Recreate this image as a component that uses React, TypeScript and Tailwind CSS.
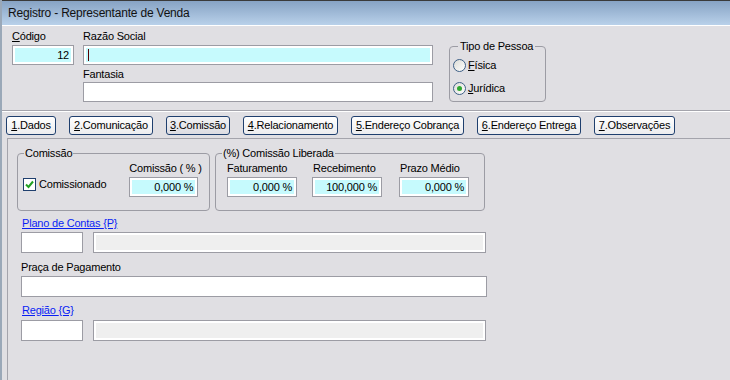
import React from 'react'

function Box({ w, h, fill, children }: { w: string; h: string; fill: string; children?: React.ReactNode }) {
  return (
    <div className={`${w} ${h} border border-[#9c9ca4] bg-white p-[2px]`}>
      <div className={`h-full w-full ${fill} flex items-center justify-end pr-[2px] leading-none whitespace-nowrap`}>{children}</div>
    </div>
  )
}

function Radio({ checked }: { checked?: boolean }) {
  return (
    <span className="w-[13px] h-[13px] rounded-full border border-[#3d5f86] bg-gradient-to-br from-[#dcdcd6] to-white flex items-center justify-center">
      {checked && <span className="w-[5px] h-[5px] rounded-full bg-[#2fa82f]" />}
    </span>
  )
}

function Tab({ w, n, label, active }: { w: string; n: string; label: string; active?: boolean }) {
  return (
    <div
      className={`${w} h-[19px] rounded-[3px] border border-[#1f3f6e] flex items-center justify-center leading-none whitespace-nowrap ${
        active ? 'bg-gradient-to-b from-[#f2f2f4] to-[#dcdce2]' : 'bg-gradient-to-b from-white to-[#ececee]'
      }`}
    >
      <span>
        <u>{n}</u>.{label}
      </span>
    </div>
  )
}

export default function App() {
  return (
    <div className="w-[730px] h-[380px] overflow-hidden bg-[#e0dfe3] border-l-2 border-[#9aa8b8] font-['Liberation_Sans',Arial,sans-serif] text-[11px] tracking-[-0.2px] text-black whitespace-nowrap flex flex-col">
      {/* title bar */}
      <div className="h-[26px] border-t border-[#3a3a3a] border-b border-b-white bg-gradient-to-b from-[#87a3c4] to-[#b9d1ea] flex items-center pl-[6px] text-[12px] text-[#111]">
        Registro - Representante de Venda
      </div>

      {/* header */}
      <div className="h-[84px] flex pl-[10px] pt-[3px]">
        <div className="w-[62px]">
          <div className="h-[14px] leading-[14px]">
            <u>C</u>ódigo
          </div>
          <div className="mt-[2px]">
            <Box w="w-[62px]" h="h-[20px]" fill="bg-[#c6fafd]">
              12
            </Box>
          </div>
        </div>

        <div className="ml-[9px] w-[350px]">
          <div className="h-[14px] leading-[14px]">Razão Social</div>
          <div className="mt-[2px] h-[20px] border border-[#9c9ca4] bg-white p-[2px]">
            <div className="h-full bg-[#c6fafd] flex items-center pl-[2px]">
              <span className="w-[1px] h-[12px] bg-[#5a0000]" />
            </div>
          </div>
          <div className="mt-[2px] h-[14px] leading-[14px]">Fantasia</div>
          <div className="mt-[1px] h-[20px] border border-[#9c9ca4] bg-white" />
        </div>

        <fieldset className="ml-[16px] mt-[11px] w-[97px] h-[62px] border border-[#9c9ca4] rounded-[4px]">
          <legend className="ml-[8px] px-[2px] leading-[12px]">Tipo de Pessoa</legend>
          <div className="flex flex-col pl-[3px] pt-[6px] gap-[9px]">
            <div className="flex items-center gap-[2px] h-[14px]">
              <Radio />
              <span>
                <u>F</u>ísica
              </span>
            </div>
            <div className="flex items-center gap-[2px] h-[14px]">
              <Radio checked />
              <span>
                <u>J</u>urídica
              </span>
            </div>
          </div>
        </fieldset>
      </div>

      {/* separator */}
      <div className="h-[2px] border-t border-[#a4a4ac] border-b border-b-white" />

      {/* tabs */}
      <div className="flex gap-[13px] pl-[4px] mt-[4px]">
        <Tab w="w-[50px]" n="1" label="Dados" />
        <Tab w="w-[84px]" n="2" label="Comunicação" />
        <Tab w="w-[64px]" n="3" label="Comissão" active />
        <Tab w="w-[95px]" n="4" label="Relacionamento" />
        <Tab w="w-[113px]" n="5" label="Endereço Cobrança" />
        <Tab w="w-[104px]" n="6" label="Endereço Entrega" />
        <Tab w="w-[81px]" n="7" label="Observações" />
      </div>

      {/* panel */}
      <div className="flex-1 ml-[5px] mt-[3px] border-t border-l border-[#a4a4ac] pl-[9px] pt-[8px]">
        <div className="flex">
          <fieldset className="w-[193px] h-[64px] border border-[#9c9ca4] rounded-[4px]">
            <legend className="ml-[6px] px-[1px] leading-[12px]">Comissão</legend>
            <div className="flex">
              <div className="flex items-center gap-[3px] ml-[5px] mt-[18px] h-[14px]">
                <span className="w-[13px] h-[13px] border border-[#1f3f6e] bg-white flex items-center justify-center">
                  <svg width="9" height="9" viewBox="0 0 9 9">
                    <path d="M1 4.5 L3.5 7 L8 1.5" fill="none" stroke="#22a022" strokeWidth="2" />
                  </svg>
                </span>
                <span>Comissionado</span>
              </div>
              <div className="ml-[23px] mt-[2px]">
                <div className="h-[14px] leading-[14px]">Comissão ( % )</div>
                <div className="mt-[2px]">
                  <Box w="w-[69px]" h="h-[20px]" fill="bg-[#c6fafd]">
                    0,000 %
                  </Box>
                </div>
              </div>
            </div>
          </fieldset>

          <fieldset className="ml-[5px] w-[270px] h-[64px] border border-[#9c9ca4] rounded-[4px]">
            <legend className="ml-[6px] px-[1px] leading-[12px]">(%) Comissão Liberada</legend>
            <div className="flex pl-[11px] mt-[2px]">
              <div>
                <div className="h-[14px] leading-[14px]">Faturamento</div>
                <div className="mt-[2px]">
                  <Box w="w-[70px]" h="h-[20px]" fill="bg-[#c6fafd]">
                    0,000 %
                  </Box>
                </div>
              </div>
              <div className="ml-[15px]">
                <div className="h-[14px] leading-[14px] pl-[1px]">Recebimento</div>
                <div className="mt-[2px]">
                  <Box w="w-[70px]" h="h-[20px]" fill="bg-[#c6fafd]">
                    100,000 %
                  </Box>
                </div>
              </div>
              <div className="ml-[17px]">
                <div className="h-[14px] leading-[14px] pl-[1px]">Prazo Médio</div>
                <div className="mt-[2px]">
                  <Box w="w-[70px]" h="h-[20px]" fill="bg-[#c6fafd]">
                    0,000 %
                  </Box>
                </div>
              </div>
            </div>
          </fieldset>
        </div>

        <div className="ml-[4px]">
          <div className="mt-[5px] h-[14px] leading-[14px] pl-[1px] text-[#0a1ef5] underline">Plano de Contas {'{P}'}</div>
          <div className="mt-[2px] flex gap-[10px]">
            <div className="w-[62px] h-[21px] border border-[#9c9ca4] bg-white" />
            <Box w="w-[393px]" h="h-[21px]" fill="bg-[#efefef]" />
          </div>

          <div className="mt-[7px] h-[14px] leading-[14px]">Praça de Pagamento</div>
          <div className="mt-[2px] w-[466px] h-[21px] border border-[#9c9ca4] bg-white" />

          <div className="mt-[6px] h-[14px] leading-[14px] pl-[1px] text-[#0a1ef5] underline">Região {'{G}'}</div>
          <div className="mt-[3px] flex gap-[10px]">
            <div className="w-[62px] h-[21px] border border-[#9c9ca4] bg-white" />
            <Box w="w-[393px]" h="h-[21px]" fill="bg-[#efefef]" />
          </div>
        </div>
      </div>
    </div>
  )
}
